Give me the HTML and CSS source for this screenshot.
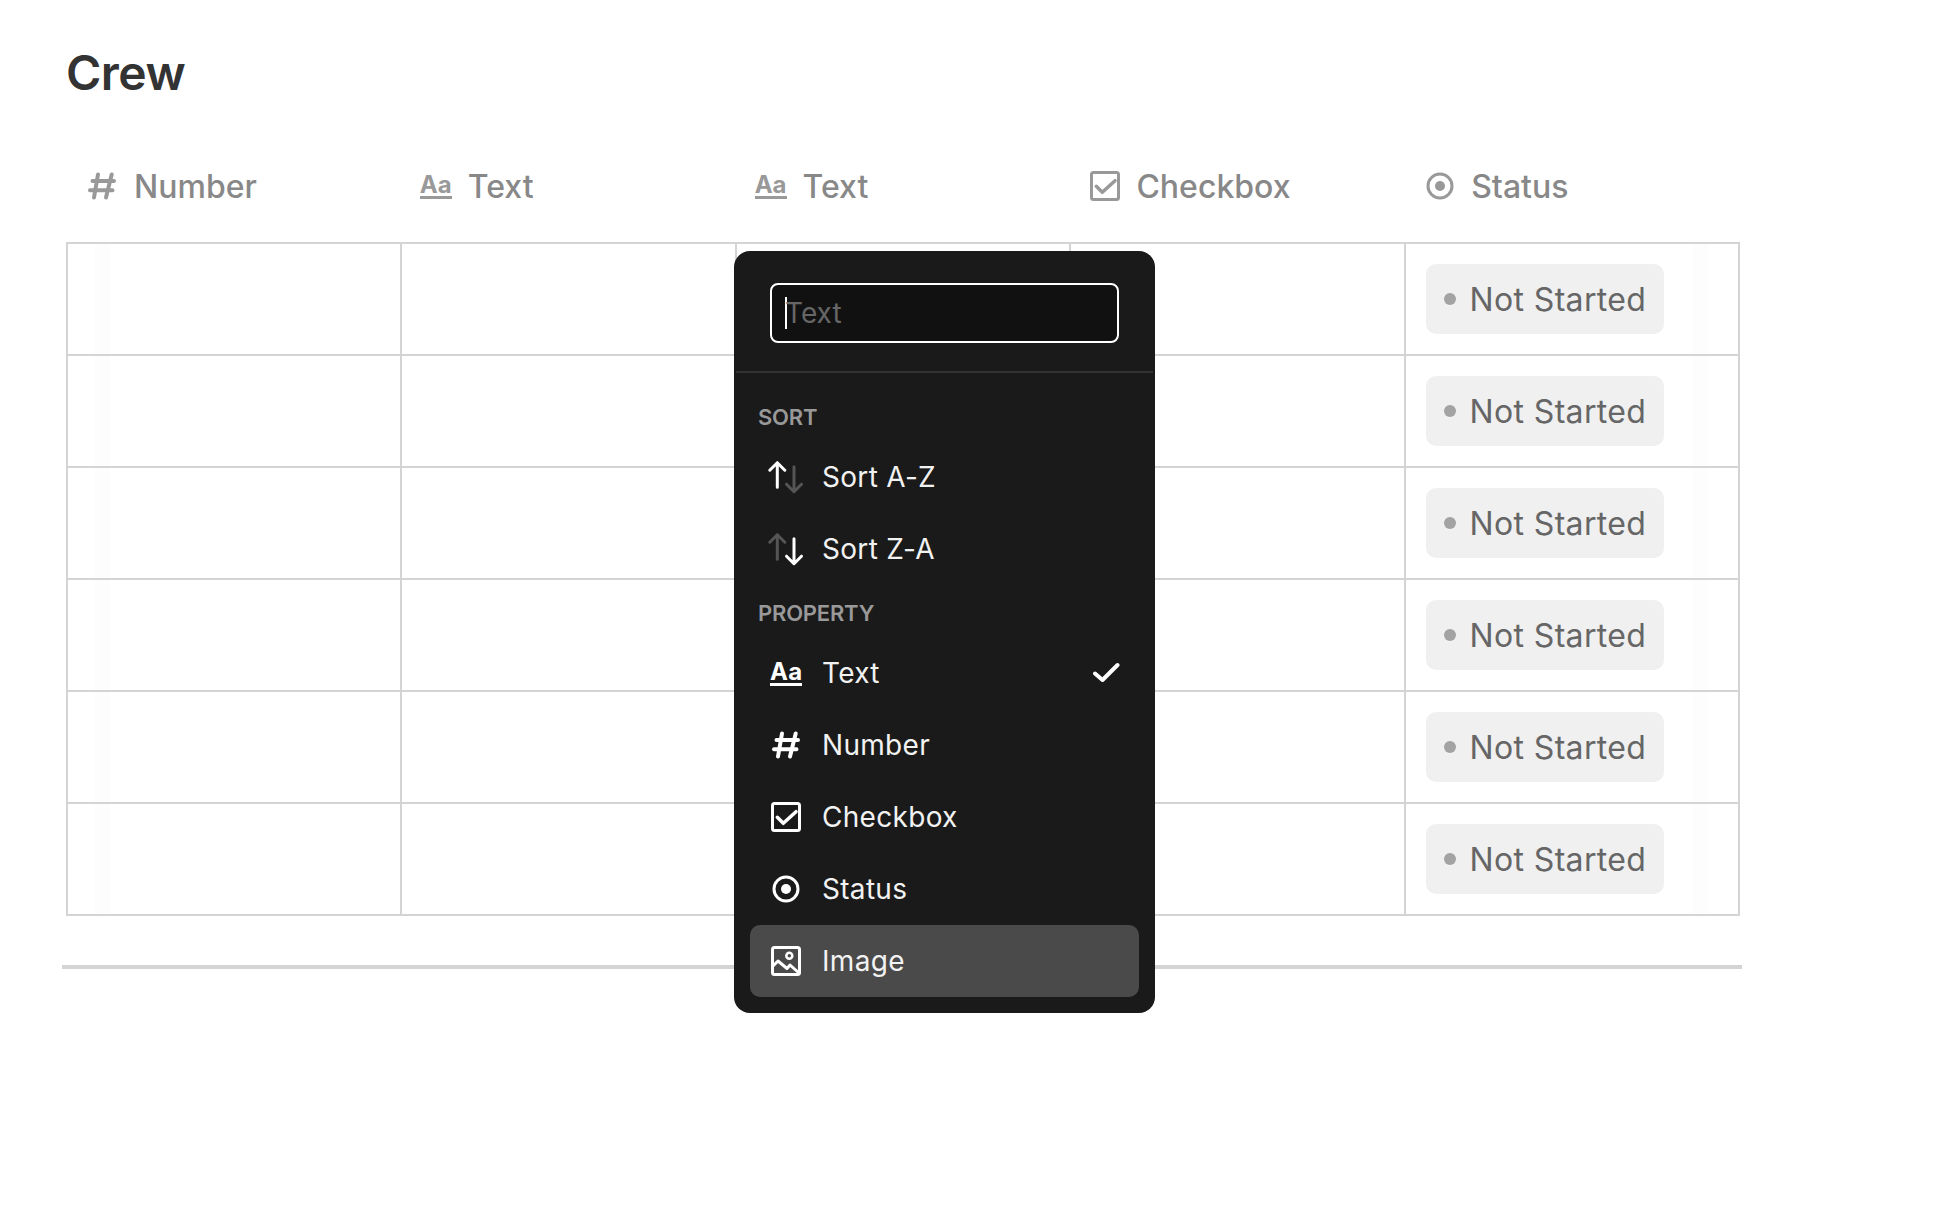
FILE: index.html
```html
<!DOCTYPE html>
<html>

<head>
	<meta charset="utf-8">
	<title>Crew</title>
	<link rel="stylesheet" href="styles.css">
</head>

<body>
	<div id="pageContent">
		<h1 class="title">Crew</h1>
		<div class="sheet">
			<div class="headRow">
				<div class="headCell numberCell">
					<svg class="icon hash" viewBox="0 0 36 36"><path d="M14 6.5 10 29.5M27.7 6.5 22 29.5M8.5 13H30M6 22.3H28.5" /></svg>
					<span>Number</span>
				</div>
				<div class="headCell">
					<span class="aa">Aa</span>
					<span>Text</span>
				</div>
				<div class="headCell">
					<span class="aa">Aa</span>
					<span>Text</span>
				</div>
				<div class="headCell">
					<svg class="icon" viewBox="0 0 36 36"><rect x="4.5" y="4.5" width="27" height="27" rx="2" /><path class="check" d="M9.3 18.3l6 6L28 12.7" /></svg>
					<span>Checkbox</span>
				</div>
				<div class="headCell">
					<svg class="icon" viewBox="0 0 36 36"><circle cx="18" cy="18" r="12" /><circle class="fill" cx="18" cy="18" r="5" /></svg>
					<span>Status</span>
				</div>
			</div>
			<div class="tableWrap">
				<div class="grid">
					<div class="cell first"></div><div class="cell"></div><div class="cell"></div><div class="cell"></div>
					<div class="cell last"><span class="pill"><i class="dot"></i>Not Started</span></div>
					<div class="cell first"></div><div class="cell"></div><div class="cell"></div><div class="cell"></div>
					<div class="cell last"><span class="pill"><i class="dot"></i>Not Started</span></div>
					<div class="cell first"></div><div class="cell"></div><div class="cell"></div><div class="cell"></div>
					<div class="cell last"><span class="pill"><i class="dot"></i>Not Started</span></div>
					<div class="cell first"></div><div class="cell"></div><div class="cell"></div><div class="cell"></div>
					<div class="cell last"><span class="pill"><i class="dot"></i>Not Started</span></div>
					<div class="cell first"></div><div class="cell"></div><div class="cell"></div><div class="cell"></div>
					<div class="cell last"><span class="pill"><i class="dot"></i>Not Started</span></div>
					<div class="cell first"></div><div class="cell"></div><div class="cell"></div><div class="cell"></div>
					<div class="cell last"><span class="pill"><i class="dot"></i>Not Started</span></div>
				</div>

				<div class="menu">
					<div class="menuTop">
						<div class="nameInput"><i class="caret"></i>Text</div>
					</div>
					<div class="menuBody">
						<div class="menuLabel">SORT</div>
						<div class="menuItem">
							<svg class="icon" viewBox="0 0 36 36"><path d="M9.3 28.3V3.7M1.8 11.2l7.5-7.5 7.5 7.5" /><path class="dim" d="M26 7.7v25M18.5 25.2l7.5 7.5 7.5-7.5" /></svg>
							<span>Sort A-Z</span>
						</div>
						<div class="menuItem">
							<svg class="icon" viewBox="0 0 36 36"><path class="dim" d="M9.3 28.3V3.7M1.8 11.2l7.5-7.5 7.5 7.5" /><path d="M26 7.7v25M18.5 25.2l7.5 7.5 7.5-7.5" /></svg>
							<span>Sort Z-A</span>
						</div>
						<div class="menuLabel second">PROPERTY</div>
						<div class="menuItem">
							<span class="aa">Aa</span>
							<span>Text</span>
							<svg class="tick" viewBox="0 0 28 22"><path d="M3 11.5l7.5 6.5L25.5 3" /></svg>
						</div>
						<div class="menuItem">
							<svg class="icon hash" viewBox="0 0 36 36"><path d="M14 6.5 10 29.5M27.7 6.5 22 29.5M8.5 13H30M6 22.3H28.5" /></svg>
							<span>Number</span>
						</div>
						<div class="menuItem">
							<svg class="icon" viewBox="0 0 36 36"><rect x="4.5" y="4.5" width="27" height="27" rx="2" /><path class="check" d="M9.3 18.3l6 6L28 12.7" /></svg>
							<span>Checkbox</span>
						</div>
						<div class="menuItem">
							<svg class="icon" viewBox="0 0 36 36"><circle cx="18" cy="18" r="12" /><circle class="fill" cx="18" cy="18" r="5" /></svg>
							<span>Status</span>
						</div>
						<div class="menuItem active">
							<svg class="icon" viewBox="0 0 36 36"><rect x="4.5" y="4.5" width="27" height="27" rx="2" /><circle class="small" cx="21.3" cy="12.7" r="3" /><path d="M4.5 23.5 10 18l9 7.5 3-3.5 9 8" /></svg>
							<span>Image</span>
						</div>
					</div>
				</div>
			</div>
			<div class="divider"></div>
		</div>
	</div>
</body>

</html>
```

FILE: styles.css
```css
* {
	box-sizing: border-box;
}

body {
	margin: 0;
	background: #fff;
	font-family: Inter, "Liberation Sans", sans-serif;
}

#pageContent {
	min-height: 1230px;
	padding: 44px 196px 0 66px;
}

.title {
	margin: 0;
	font-size: 48px;
	line-height: 58px;
	font-weight: 600;
	letter-spacing: -0.5px;
	color: #333;
}

.headRow {
	display: grid;
	grid-template-columns: repeat(5, 1fr);
	height: 140px;
	padding-top: 48px;
	color: #888;
}

.headCell {
	display: flex;
	align-items: center;
	gap: 13px;
	height: 72px;
	padding-left: 17px;
	font-size: 32px;
	font-weight: 500;
}

.headCell.numberCell {
	gap: 14px;
	padding-left: 18px;
}

.icon {
	width: 36px;
	height: 36px;
	flex: none;
	fill: none;
	stroke: currentColor;
	stroke-width: 3;
	stroke-linecap: round;
	stroke-linejoin: round;
}

.icon .fill {
	fill: currentColor;
	stroke: none;
}

.icon .dim {
	stroke: #555;
}

.icon .small {
	stroke-width: 2.5;
}

.icon .check {
	stroke-width: 3.5;
}

.icon.hash {
	stroke-width: 4;
}

.aa {
	display: block;
	width: 36px;
	flex: none;
	margin-bottom: 2px;
	padding: 0 2px;
	font-size: 24px;
	line-height: 25px;
	font-weight: 700;
	text-align: center;
	white-space: nowrap;
}

.aa::after {
	content: "";
	display: block;
	height: 3px;
	margin-top: -1px;
	background: currentColor;
}

.headCell .icon,
.headCell .aa {
	color: #999;
}

.headCell .aa {
	margin-right: 1px;
}

.tableWrap {
	position: relative;
}

.grid {
	display: grid;
	grid-template-columns: repeat(5, 1fr);
	grid-auto-rows: 112px;
	border-top: 2px solid #d4d4d4;
	border-left: 2px solid #d4d4d4;
}

.cell {
	display: flex;
	align-items: center;
	padding-left: 20px;
	border-right: 2px solid #d4d4d4;
	border-bottom: 2px solid #d4d4d4;
}

.cell.first {
	background: linear-gradient(#fdfdfd, #fdfdfd) 27px 0 / 15px 100% no-repeat;
}

.cell.last {
	background: linear-gradient(#fdfdfd, #fdfdfd) 287px 0 / 15px 100% no-repeat;
}

.pill {
	display: flex;
	align-items: center;
	gap: 14px;
	height: 70px;
	padding: 0 18px;
	border-radius: 10px;
	background: #f0f0f0;
	color: #666;
	font-size: 32px;
	letter-spacing: 0.35px;
	white-space: nowrap;
}

.dot {
	width: 12px;
	height: 12px;
	border-radius: 50%;
	background: #a3a3a3;
}

.menu {
	position: absolute;
	left: 668px;
	top: 9px;
	width: 421px;
	height: 762px;
	border-radius: 16px;
	background: #1a1a1a;
	color: #f2f2f2;
}

.menuTop {
	margin: 0 2px;
	padding: 32px 34px 28px;
	border-bottom: 2px solid #333;
}

.nameInput {
	display: flex;
	align-items: center;
	height: 60px;
	padding-left: 13px;
	border: 2px solid #fff;
	border-radius: 8px;
	background: #111;
	color: #666;
	font-size: 28px;
}

.caret {
	width: 2px;
	height: 32px;
	margin-right: -2px;
	background: #fff;
}

.menuBody {
	padding: 30px 16px 16px;
}

.menuLabel {
	margin: 0 8px 10px;
	font-size: 22px;
	line-height: 28px;
	font-weight: 600;
	letter-spacing: -0.2px;
	color: #999;
}

.menuLabel.second {
	margin-top: 14px;
}

.menuItem {
	display: flex;
	align-items: center;
	gap: 18px;
	height: 72px;
	padding: 0 19px 0 18px;
	border-radius: 10px;
	font-size: 28px;
	letter-spacing: 0.3px;
}

.menuItem .icon,
.menuItem .aa {
	color: #fff;
}

.menuItem.active {
	background: #4a4a4a;
}

.tick {
	width: 28px;
	height: 22px;
	margin-left: auto;
	fill: none;
	stroke: #fff;
	stroke-width: 4;
	stroke-linecap: round;
	stroke-linejoin: round;
}

.divider {
	height: 4px;
	margin: 49px -2px 0 -4px;
	background: #d4d4d4;
}
```
